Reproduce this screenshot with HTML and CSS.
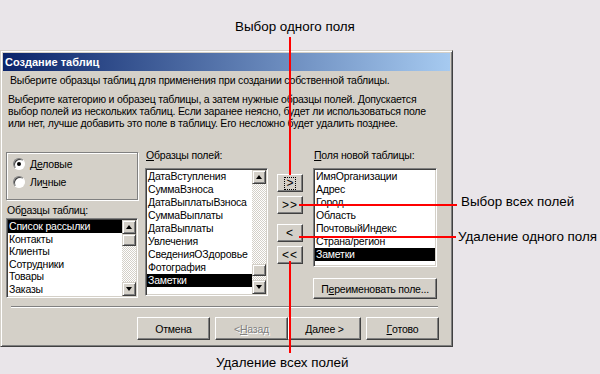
FILE: index.html
```html
<!DOCTYPE html>
<html lang="ru">
<head>
<meta charset="utf-8">
<title>Создание таблиц</title>
<link rel="stylesheet" href="styles.css">
</head>
<body>
<div class="dialog">
  <div class="titlebar">Создание таблиц</div>
  <div class="content">
    <p class="lead">Выберите образцы таблиц для применения при создании собственной таблицы.</p>
    <p class="info">Выберите категорию и образец таблицы, а затем нужные образцы полей. Допускается<br>выбор полей из нескольких таблиц. Если заранее неясно, будет ли использоваться поле<br>или нет, лучше добавить это поле в таблицу. Его несложно будет удалить позднее.</p>
    <div class="main">
      <div class="col col-left">
        <div class="group">
          <div class="radio checked"><span class="dot"></span><span>Д<u>е</u>ловые</span></div>
          <div class="radio"><span class="dot"></span><span>Ли<u>ч</u>ные</span></div>
        </div>
        <div class="label label-tables">Об<u>р</u>азцы таблиц:</div>
        <div class="listbox lb-tables">
          <div class="items">
            <div class="item sel">Список рассылки</div>
            <div class="item">Контакты</div>
            <div class="item">Клиенты</div>
            <div class="item">Сотрудники</div>
            <div class="item">Товары</div>
            <div class="item">Заказы</div>
          </div>
          <div class="sb">
            <div class="arr up"></div>
            <div class="thumb"></div>
            <div class="track"></div>
            <div class="arr down"></div>
          </div>
        </div>
      </div>
      <div class="col col-fields">
        <div class="label"><u>О</u>бразцы полей:</div>
        <div class="listbox lb-fields">
          <div class="items">
            <div class="item">ДатаВступления</div>
            <div class="item">СуммаВзноса</div>
            <div class="item">ДатаВыплатыВзноса</div>
            <div class="item">СуммаВыплаты</div>
            <div class="item">ДатаВыплаты</div>
            <div class="item">Увлечения</div>
            <div class="item">СведенияОЗдоровье</div>
            <div class="item">Фотография</div>
            <div class="item sel">Заметки</div>
          </div>
          <div class="sb">
            <div class="arr up"></div>
            <div class="track"></div>
            <div class="thumb"></div>
            <div class="track short"></div>
            <div class="arr down"></div>
          </div>
        </div>
      </div>
      <div class="col col-buttons">
        <div class="btn mv mv1"><span class="focus">&gt;</span></div>
        <div class="btn mv mv2">&gt;&gt;</div>
        <div class="btn mv mv3">&lt;</div>
        <div class="btn mv mv4">&lt;&lt;</div>
      </div>
      <div class="col col-new">
        <div class="label"><u>П</u>оля новой таблицы:</div>
        <div class="listbox lb-new">
          <div class="items">
            <div class="item">ИмяОрганизации</div>
            <div class="item">Адрес</div>
            <div class="item">Город</div>
            <div class="item">Область</div>
            <div class="item">ПочтовыйИндекс</div>
            <div class="item">Страна/регион</div>
            <div class="item sel">Заметки</div>
          </div>
        </div>
        <div class="btn rename">П<u>е</u>реименовать поле...</div>
      </div>
    </div>
    <div class="sep"></div>
    <div class="footer">
      <div class="btn fb">Отмена</div>
      <div class="btn fb disabled">&lt; <u>Н</u>азад</div>
      <div class="btn fb nogap"><u>Д</u>алее &gt;</div>
      <div class="btn fb"><u>Г</u>отово</div>
    </div>
  </div>
</div>

<div class="ann-line v-top"></div>
<div class="ann-line h-all"></div>
<div class="ann-line h-one"></div>
<div class="ann-line v-bottom"></div>
<div class="ann-label a-top">Выбор одного поля</div>
<div class="ann-label a-all">Выбор всех полей</div>
<div class="ann-label a-one">Удаление одного поля</div>
<div class="ann-label a-bottom">Удаление всех полей</div>
</body>
</html>
```
FILE: styles.css
```css
* { box-sizing: border-box; margin: 0; padding: 0; }
html, body { width: 600px; height: 374px; overflow: hidden; }
body {
  background: #e9e5e9;
  font-family: "Liberation Sans", Arial, sans-serif;
  font-size: 10.5px;
  letter-spacing: -0.2px;
  color: #000;
  position: relative;
}
u { text-decoration: underline; text-underline-offset: 1px; }

.dialog {
  margin-top: 50px;
  width: 453px;
  height: 297px;
  background: #d4d0c8;
  border: 1px solid;
  border-color: #d4d0c8 #404040 #404040 #d4d0c8;
  box-shadow: inset 1px 1px #fff, inset -1px -1px #808080;
  padding: 2px;
  display: flex;
  flex-direction: column;
}
.titlebar {
  height: 18px;
  background: linear-gradient(90deg, #0a246a, #a6caf0);
  color: #fff;
  font-weight: bold;
  font-size: 11px;
  letter-spacing: 0;
  line-height: 18px;
  padding-left: 2px;
}
.content { flex: 1; display: flex; flex-direction: column; }
.lead { margin: 3px 0 0 7px; line-height: 12px; white-space: nowrap; }
.info { margin: 7px 0 0 5px; line-height: 12px; white-space: nowrap; }

.main { display: flex; margin-top: 20px; padding-left: 3px; height: 150px; }
.col { display: flex; flex-direction: column; }
.col-left { width: 132px; }
.col-fields { width: 123px; margin-left: 7px; }
.col-buttons { width: 26px; margin-left: 9px; }
.col-new { width: 124px; margin-left: 10px; }

.label { line-height: 12px; height: 12px; padding-left: 1px; white-space: nowrap; }

.group {
  margin-top: 3px;
  height: 48px;
  border: 1px solid #808080;
  box-shadow: 1px 1px #fff, inset 1px 1px #fff;
  padding: 5px 0 0 6px;
  display: flex;
  flex-direction: column;
  gap: 6px;
}
.radio { display: flex; align-items: center; height: 12px; gap: 5px; }
.dot {
  width: 12px; height: 12px; border-radius: 50%;
  background: #fff;
  border: 1px solid;
  border-color: #808080 #fff #fff #808080;
  box-shadow: inset 1px 1px #404040;
  position: relative;
}
.radio.checked .dot::after {
  content: ""; position: absolute; left: 3px; top: 3px;
  width: 4px; height: 4px; border-radius: 50%; background: #000;
}
.label-tables { margin-top: 4px; }

.listbox {
  background: #fff;
  border: 1px solid;
  border-color: #808080 #fff #fff #808080;
  box-shadow: inset 1px 1px #404040, inset -1px -1px #d4d0c8;
  padding: 1px;
  display: flex;
  overflow: hidden;
}
.items { flex: 1; display: flex; flex-direction: column; overflow: hidden; }
.item { flex: 0 0 13px; height: 13px; line-height: 13px; padding-left: 1px; white-space: nowrap; }
.item.sel { background: #000; color: #fff; }

.lb-tables { margin-top: 2px; height: 80px; }
.lb-tables .item { flex-basis: 12.6px; height: 12.6px; line-height: 12.6px; }
.lb-fields { margin-top: 7px; height: 128px; }
.lb-new { margin-top: 7px; height: 100px; }

.sb { width: 14px; display: flex; flex-direction: column; }
.arr, .thumb {
  background: #d4d0c8;
  border: 1px solid;
  border-color: #d4d0c8 #404040 #404040 #d4d0c8;
  box-shadow: inset 1px 1px #fff, inset -1px -1px #808080;
  position: relative;
}
.arr { height: 14px; display: flex; align-items: center; justify-content: center; }
.arr::after { content: ""; width: 0; height: 0; border: 3px solid transparent; }
.arr.up::after { border-bottom: 4px solid #000; border-top-width: 0; }
.arr.down::after { border-top: 4px solid #000; border-bottom-width: 0; }
.thumb { height: 12px; }
.track {
  flex: 1;
  background-image: conic-gradient(#fff 25%, #d4d0c8 0 50%, #fff 0 75%, #d4d0c8 0);
  background-size: 2px 2px;
}
.track.short { flex: 0 0 4px; }

.btn {
  background: #d4d0c8;
  border: 1px solid;
  border-color: #fff #404040 #404040 #fff;
  box-shadow: inset -1px -1px #808080;
  display: flex; align-items: center; justify-content: center;
  white-space: nowrap;
}
.mv { height: 18px; font-size: 12px; letter-spacing: 1px; }
.mv1 { margin-top: 25px; }
.mv2 { margin-top: 4px; }
.mv3 { margin-top: 10px; }
.mv4 { margin-top: 4px; }
.focus { border: 1px dotted #000; padding: 0 1px; line-height: 11px; letter-spacing: 0; }

.rename { margin-top: 11px; height: 21px; }

.sep {
  margin: 7px 0 0 8px;
  width: 427px;
  height: 2px;
  border-top: 1px solid #808080;
  border-bottom: 1px solid #fff;
}
.footer { display: flex; gap: 5px; padding-left: 134px; margin-top: 9px; }
.fb { width: 73px; height: 23px; }
.fb.nogap { margin-left: -5px; }
.fb.disabled { color: #808080; text-shadow: 1px 1px #fff; }

.ann-line { position: absolute; background: #f00; }
.v-top { left: 289px; top: 37px; width: 2px; height: 138px; }
.h-all { left: 299px; top: 204px; width: 158px; height: 2px; }
.h-one { left: 299px; top: 236px; width: 157px; height: 2px; }
.v-bottom { left: 289px; top: 261px; width: 2px; height: 92px; }

.ann-label {
  position: absolute;
  font-family: "Liberation Sans", Arial, sans-serif;
  font-size: 13.4px;
  letter-spacing: 0;
  line-height: 16px;
  color: #000;
  white-space: nowrap;
}
.a-top { left: 235px; top: 19px; }
.a-all { left: 461px; top: 194px; }
.a-one { left: 458px; top: 229px; }
.a-bottom { left: 216px; top: 355px; }
```
